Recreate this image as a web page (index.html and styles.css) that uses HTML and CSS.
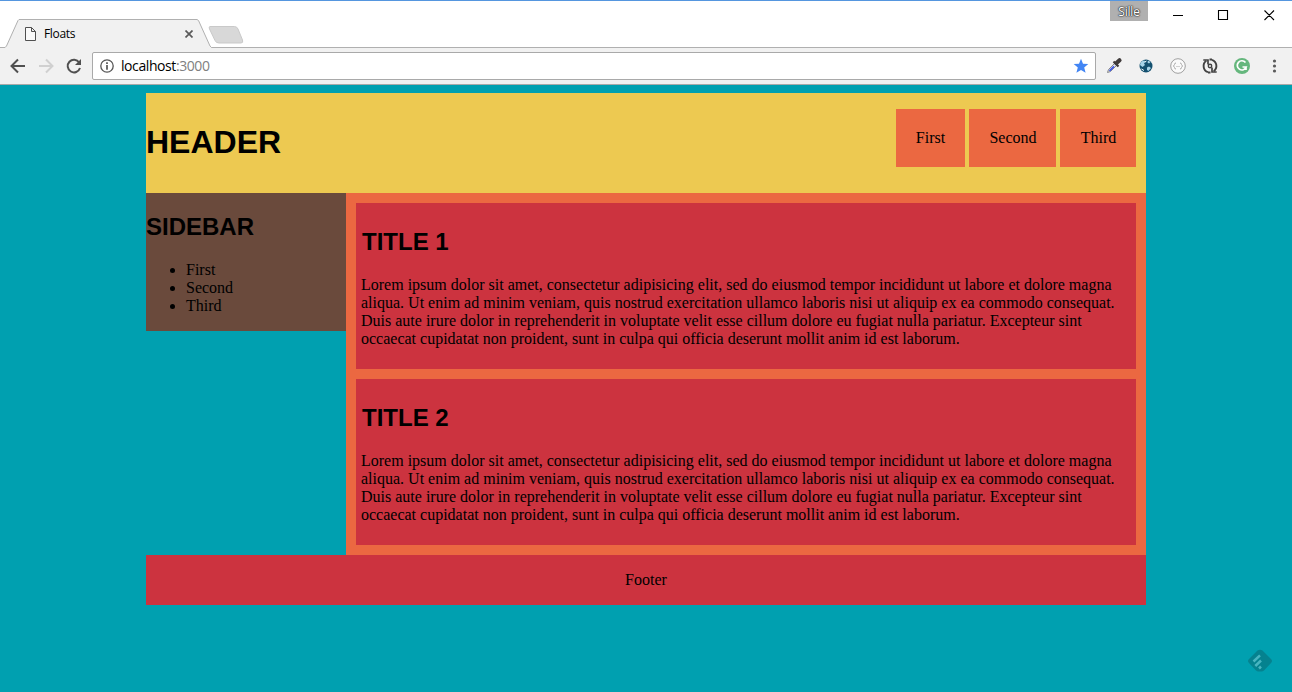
FILE: index.html
```html
<!DOCTYPE html>
<html lang="en">
<head>
<meta charset="utf-8">
<title>Floats</title>
<link rel="stylesheet" href="styles.css">
</head>
<body>
<div class="browser">
  <div class="titlebar">
    <div class="tabs">
      <div class="tab">
        <svg class="tab-shape" width="250" height="30" viewBox="0 0 250 30"><path d="M0 29.500H5L6.500 28 18 2.500 19 1.500H197L198.500 2.500 210 28 211.500 29.500H250V30H0Z" fill="#f1f1f1"/><path d="M0 29.500H5L6.500 28 18 2.500 19 1.500H197L198.500 2.500 210 28 211.500 29.500H250" fill="none" stroke="#b0b0b0"/><path d="M210 8.500H234.500Q237 8.500 238 11L242.500 22Q243.500 25 241 25H219Q216 25 215 22.500L209.500 11Q208.500 8.500 210 8.500Z" fill="#d8d8d8" stroke="#c9c9c9"/></svg>
        <svg class="file-icon" width="11" height="14" viewBox="0 0 11 14"><path d="M.5.5H6.500L10.500 4.500V13.500H.5ZM6.500.5V4.500H10.500" fill="#fafafa" stroke="#505050"/></svg>
        <span class="tab-title">Floats</span>
        <svg class="tab-close" width="8" height="8" viewBox="0 0 8 8"><path d="M.5.5 7.500 7.500M7.500.5.5 7.500" stroke="#5a5a5a" stroke-width="1.700"/></svg>
      </div>
    </div>
    <div class="profile">Sille</div>
    <svg class="window-controls" width="144" height="30" viewBox="0 0 144 30"><path d="M25 15.500H35M70.500 10.500H79.500V19.500H70.500ZM116.500 10.500 126 20M126 10.500 116.500 20" fill="none" stroke="#000" stroke-width="1.100"/></svg>
  </div>
  <div class="toolbar">
    <svg class="nav-icons" width="92" height="36" viewBox="0 0 92 36" fill="none" stroke-width="2"><path d="M25 18H12M18 11.500 11.500 18 18 24.500" stroke="#505050"/><path d="M39 18H52M46 11.500 52.500 18 46 24.500" stroke="#d0d0d0"/><path d="M79.200 14.500A6.300 6.300 0 1 0 80 20" stroke="#505050"/><path d="M81 11V17H75Z" fill="#505050"/></svg>
    <div class="address">
      <svg width="14" height="14" viewBox="0 0 14 14"><circle cx="7" cy="7" r="6.200" fill="none" stroke="#555" stroke-width="1.300"/><path d="M7 6V10.700M7 3.200V5" stroke="#555" stroke-width="1.700"/></svg>
      <span class="url">localhost<span class="port">:3000</span></span>
      <svg class="star" width="16" height="16" viewBox="0 0 16 16"><path d="M8 .8 10 5.800 15.300 6.100 11.200 9.500 12.600 14.800 8 11.900 3.400 14.800 4.800 9.500.7 6.100 6 5.800Z" fill="#4285f4"/></svg>
    </div>
    <svg class="extensions" width="196" height="36" viewBox="0 0 196 36">
      <path d="M11.500 24.500 12.500 21.500 19 15 21 17 14.500 23.500Z" fill="#dfe6f5" stroke="#888"/><path d="M13.500 22.800 18 18.300" stroke="#3d56e6" stroke-width="1.800"/><path d="M17.500 13.500 22.500 18.500" stroke="#403b3b" stroke-width="2.200"/><path d="M20.500 15 23.500 12.300" stroke="#403b3b" stroke-width="4.200" stroke-linecap="round"/>
      <circle cx="50" cy="18" r="6.500" fill="#14506f"/><path d="M44 17Q44.500 13 48 12.500L50 13.500 48 15.500 49 17 46.500 19ZM52 12.500 54.500 14 53 15.500 51.500 14.500ZM51 19.500 53 18.500 55 20 52.500 23 51 22Z" fill="#a8d4e8"/><path d="M45.500 21 48 22.500M49 14 50.500 13" stroke="#fff"/>
      <circle cx="82" cy="18" r="7.300" fill="#fafafa" stroke="#a0a0a0"/><path d="M80 15Q78.500 15 78.500 16.500L77.500 18 78.500 19.500Q78.500 21 80 21M84 15Q85.500 15 85.500 16.500L86.500 18 85.500 19.500Q85.500 21 84 21M80.500 18.500H81.500M82.500 18.500H83.500" fill="none" stroke="#aaa"/>
      <g fill="none" stroke="#424242" stroke-width="1.900"><path d="M112 24.200A6.500 6.500 0 0 1 110.300 12.800M116 11.800A6.500 6.500 0 0 1 117.700 23.200"/><path d="M107.300 12H112V16.500M120.700 24H116V19.500" stroke-width="1.700"/><path d="M113.500 11.500H116M112 24.500H114.500"/><circle cx="114" cy="18" r="1.700" stroke-width="1.400"/></g>
      <circle cx="146" cy="18" r="8" fill="#65b77d"/><path d="M149.500 14.500A4.600 4.600 0 1 0 150.200 19H146.500M150 18.500V22" fill="none" stroke="#fff" stroke-width="1.700"/>
      <g fill="#5a5a5a"><circle cx="178.500" cy="13" r="1.600"/><circle cx="178.500" cy="18" r="1.600"/><circle cx="178.500" cy="23" r="1.600"/></g>
    </svg>
  </div>
</div>
<div class="page">
  <header class="header">
    <h1>HEADER</h1>
    <nav class="menu"><a>First</a><a class="second">Second</a><a class="third">Third</a></nav>
  </header>
  <div class="columns">
    <aside class="sidebar">
      <h2>SIDEBAR</h2>
      <ul><li>First</li><li>Second</li><li>Third</li></ul>
    </aside>
    <main class="content">
      <article>
        <h2>TITLE 1</h2>
        <p>Lorem ipsum dolor sit amet, consectetur adipisicing elit, sed do eiusmod tempor incididunt ut labore et dolore magna aliqua. Ut enim ad minim veniam, quis nostrud exercitation ullamco laboris nisi ut aliquip ex ea commodo consequat. Duis aute irure dolor in reprehenderit in voluptate velit esse cillum dolore eu fugiat nulla pariatur. Excepteur sint occaecat cupidatat non proident, sunt in culpa qui officia deserunt mollit anim id est laborum.</p>
      </article>
      <article>
        <h2>TITLE 2</h2>
        <p>Lorem ipsum dolor sit amet, consectetur adipisicing elit, sed do eiusmod tempor incididunt ut labore et dolore magna aliqua. Ut enim ad minim veniam, quis nostrud exercitation ullamco laboris nisi ut aliquip ex ea commodo consequat. Duis aute irure dolor in reprehenderit in voluptate velit esse cillum dolore eu fugiat nulla pariatur. Excepteur sint occaecat cupidatat non proident, sunt in culpa qui officia deserunt mollit anim id est laborum.</p>
      </article>
    </main>
  </div>
  <footer class="footer">Footer</footer>
</div>
<svg class="feed-badge" width="26" height="24" viewBox="0 0 26 24"><path d="M10.500 1.500Q13 0 15.500 1.500L24 10Q26 12 24 14L17 21.500Q16 22.500 14.500 22.500H11.500Q10 22.500 9 21.500L2 14Q0 12 2 10Z" fill="#05828f"/><path d="M6.500 12.500 13 6.300M8.300 17 14 11.500M12 19.500 14 17.500" stroke="#48b5c0" stroke-width="2.500"/></svg>
</body>
</html>
```
FILE: styles.css
```css
* { box-sizing: border-box; }
body {
  margin: 0;
  height: 692px;
  overflow: hidden;
  background: #00a0b0;
  color: #000;
  font: 16px/18px "Liberation Serif", "Times New Roman", serif;
}
svg { display: block; flex: none; }
.browser { font-family: "Open Sans", "Noto Sans", sans-serif; }
.titlebar {
  display: flex;
  height: 48px;
  background: #fff;
  border-top: 1px solid #5596df;
  box-shadow: inset 0 -1px #b0b0b0;
}
.tabs { flex: 1; padding-top: 17px; }
.tab {
  position: relative;
  display: flex;
  align-items: center;
  width: 250px;
  height: 30px;
  padding-left: 25px;
}
.tab-shape { position: absolute; left: 0; top: 0; }
.file-icon, .tab-title, .tab-close { position: relative; }
.file-icon, .tab-close { margin-top: 2px; }
.tab-title { width: 140px; margin: 2px 0 0 8px; font-size: 12px; letter-spacing: -0.35px; }
.tab-close { margin-left: 1px; }
.profile {
  width: 38px;
  height: 20px;
  background: #b0b0b0;
  color: #fff;
  font-size: 12px;
  line-height: 21px;
  letter-spacing: -0.2px;
  text-align: center;
  text-shadow: 0 0 2px #222, 0 0 1px #222, 0 0 1px #222;
}
.window-controls { margin-top: -1px; }
.toolbar {
  display: flex;
  height: 37px;
  background: #f1f1f1;
  border-bottom: 1px solid #a9a9a9;
}
.address {
  display: flex;
  align-items: center;
  width: 1004px;
  height: 28px;
  margin-top: 4px;
  padding: 0 6px 0 7px;
  background: #fff;
  border: 1px solid #a9a9a9;
  border-radius: 2px;
}
.url { flex: 1; margin-left: 7px; font-size: 14px; letter-spacing: -0.42px; }
.port { color: #808080; }
.page { width: 1000px; margin: 8px auto 0; }
.header {
  display: flex;
  justify-content: space-between;
  height: 100px;
  padding-right: 10px;
  background: #edc951;
}
h1, h2 { font-family: "Liberation Sans", Arial, sans-serif; font-weight: bold; }
h1 { margin: 31px 0 0; font-size: 32px; line-height: 37px; }
h2 { margin: 0 0 20px; font-size: 24px; line-height: 28px; }
.menu { display: flex; gap: 4px; margin-top: 16px; }
.menu a { width: 69px; height: 58px; padding: 20px 0; background: #eb6841; text-align: center; }
.menu .second { width: 87px; padding-left: 1px; }
.menu .third { width: 76px; padding-left: 1px; }
.columns { display: flex; align-items: flex-start; background: #00a0b0; }
.sidebar { width: 200px; height: 138px; padding-top: 20px; background: #6a4a3c; }
.sidebar ul { margin: 0; padding-left: 40px; }
.content {
  display: flex;
  flex-direction: column;
  gap: 10px;
  width: 800px;
  height: 362px;
  padding: 10px;
  background: #eb6841;
}
article { height: 166px; padding: 25px 5px 0; background: #cc333f; }
article h2 { padding-left: 1px; }
article p { margin: 0; }
.footer { height: 50px; padding-top: 16px; background: #cc333f; text-align: center; }
.feed-badge { position: absolute; left: 1247px; top: 649px; }
```
